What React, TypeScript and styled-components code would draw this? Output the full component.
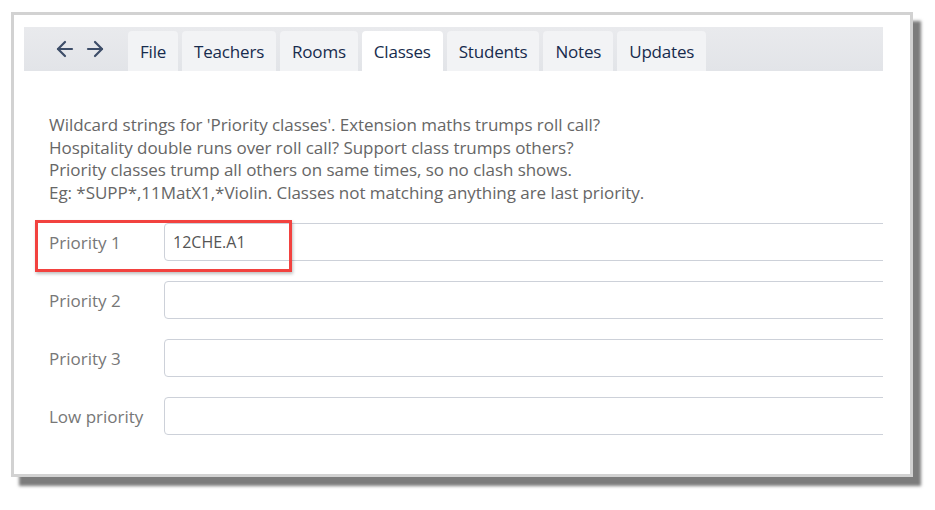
import React from 'react';
import styled, { createGlobalStyle } from 'styled-components';
import { ArrowLeft, ArrowRight } from 'lucide-react';

const GlobalStyle = createGlobalStyle`
  body {
    margin: 0;
    background: #ffffff;
    font-family: 'Open Sans', 'Noto Sans', sans-serif;
  }
`;

const Page = styled.div`
  padding: 12px 0 0 11px;
  width: 935px;
  height: 510px;
  box-sizing: border-box;
`;

const Frame = styled.div`
  width: 902px;
  height: 465px;
  box-sizing: border-box;
  border: 3px solid #d2d2d2;
  background: #fff;
  box-shadow: 8px 9px 3px #7c7c7c;
  padding: 12px 27px 0 10px;
`;

const TabBar = styled.div`
  height: 44px;
  display: flex;
  align-items: flex-end;
  background: linear-gradient(#e9eaed, #e2e4e8);
`;

const NavArrows = styled.div`
  width: 104px;
  height: 44px;
  display: flex;
  align-items: center;
  gap: 6px;
  padding-left: 29px;
  box-sizing: border-box;
  color: #3d4d68;
`;

const Tabs = styled.div`
  display: flex;
  gap: 4px;
`;

const Tab = styled.div<{ active?: boolean }>`
  height: 40px;
  display: flex;
  align-items: center;
  padding: 0 12px;
  border-radius: 4px 4px 0 0;
  background: ${p => (p.active ? '#ffffff' : '#f2f3f5')};
  color: #172b4d;
  font-size: 17px;
  font-weight: 500;
  letter-spacing: -0.2px;
`;

const Content = styled.div`
  padding: 43px 0 0 25px;
  overflow: hidden;
`;

const Description = styled.p`
  margin: 0 0 19px;
  font-size: 17px;
  line-height: 22.5px;
  color: #666;
  letter-spacing: -0.05px;
`;

const Rows = styled.div`
  display: flex;
  flex-direction: column;
  gap: 20px;
`;

const Row = styled.div`
  position: relative;
  display: flex;
  align-items: center;
`;

const Label = styled.label`
  width: 115px;
  flex: none;
  font-size: 17px;
  color: #777;
`;

const Input = styled.div`
  flex: 1;
  height: 38px;
  margin-right: -12px;
  box-sizing: border-box;
  border: 1px solid #cdd1d9;
  border-radius: 4px;
  display: flex;
  align-items: center;
  padding-left: 8px;
  font-size: 16px;
  color: #555;
`;

const Highlight = styled.div`
  position: absolute;
  left: -14px;
  top: -3px;
  width: 257px;
  height: 52px;
  box-sizing: border-box;
  border: 3px solid #f2423f;
  box-shadow: 1px 2px 3px rgba(0, 0, 0, 0.25);
  pointer-events: none;
`;

const tabs = ['File', 'Teachers', 'Rooms', 'Classes', 'Students', 'Notes', 'Updates'];

const rows = [
  { label: 'Priority 1', value: '12CHE.A1' },
  { label: 'Priority 2', value: '' },
  { label: 'Priority 3', value: '' },
  { label: 'Low priority', value: '' },
];

const App: React.FC = () => (
  <>
    <GlobalStyle />
    <Page>
      <Frame>
        <TabBar>
          <NavArrows>
            <ArrowLeft size={24} strokeWidth={2.2} />
            <ArrowRight size={24} strokeWidth={2.2} />
          </NavArrows>
          <Tabs>
            {tabs.map(t => (
              <Tab key={t} active={t === 'Classes'}>{t}</Tab>
            ))}
          </Tabs>
        </TabBar>
        <Content>
          <Description>
            Wildcard strings for 'Priority classes'. Extension maths trumps roll call?<br />
            Hospitality double runs over roll call? Support class trumps others?<br />
            Priority classes trump all others on same times, so no clash shows.<br />
            Eg: *SUPP*,11MatX1,*Violin. Classes not matching anything are last priority.
          </Description>
          <Rows>
            {rows.map((r, i) => (
              <Row key={r.label}>
                <Label>{r.label}</Label>
                <Input>{r.value}</Input>
                {i === 0 && <Highlight />}
              </Row>
            ))}
          </Rows>
        </Content>
      </Frame>
    </Page>
  </>
);

export default App;
